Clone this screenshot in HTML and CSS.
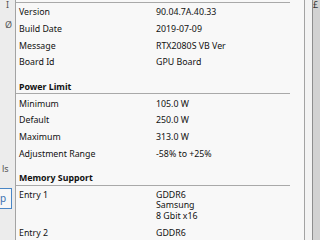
FILE: index.html
```html
<!DOCTYPE HTML>
<html>
<head>
	<title>BIOS Info</title>
	<meta name="viewport" content="width=device-width">
	<link rel="stylesheet" href="styles.css">
</head>
<body>
	<div class="window">
		<div class="sidestrip">
			<div class="frag fone">I</div>
			<div class="frag ftwo">Ø</div>
			<div class="frag fthree">ls</div>
			<div class="fbox">p</div>
		</div>
		<div class="panel">
			<div class="section first">
				<div class="row"><span class="label">Version</span><span class="value">90.04.7A.40.33</span></div>
				<div class="row"><span class="label">Build Date</span><span class="value">2019-07-09</span></div>
				<div class="row"><span class="label">Message</span><span class="value">RTX2080S VB Ver</span></div>
				<div class="row"><span class="label">Board Id</span><span class="value">GPU Board</span></div>
			</div>
			<div class="section">
				<div class="shead">Power Limit</div>
				<div class="row"><span class="label">Minimum</span><span class="value">105.0 W</span></div>
				<div class="row"><span class="label">Default</span><span class="value">250.0 W</span></div>
				<div class="row"><span class="label">Maximum</span><span class="value">313.0 W</span></div>
				<div class="row"><span class="label">Adjustment Range</span><span class="value">-58% to +25%</span></div>
			</div>
			<div class="section">
				<div class="shead">Memory Support</div>
				<div class="row multi"><span class="label">Entry 1</span><span class="value">GDDR6<br>Samsung<br>8 Gbit x16</span></div>
				<div class="row"><span class="label">Entry 2</span><span class="value">GDDR6</span></div>
			</div>
		</div>
		<div class="rightstrip">
			<div class="gap"></div>
			<div class="scroll"><div class="frag fright">£</div></div>
		</div>
	</div>
</body>
</html>
```

FILE: styles.css
```css
/* base */
* {
	font-family: "Noto Sans", "Open Sans", sans-serif;
	box-sizing: border-box;
}
body {
	margin: 0;
	background-color: #f0f0f0;
	color: #111111;
	font-size: 8.8px;
}
.window {
	display: flex;
	width: 320px;
	height: 240px;
	overflow: hidden;
}

/* neighbour pane, clipped on the left */
.sidestrip {
	width: 16px;
	flex: none;
	background-color: #ececec;
	border-right: 1px solid #a3a3a3;
	overflow: hidden;
	display: flex;
	flex-direction: column;
}
.frag {
	color: #555555;
	font-size: 9px;
	line-height: 10px;
	white-space: nowrap;
}
.fone {
	margin: 0 0 0 6px;
}
.ftwo {
	margin: 10px 0 0 5px;
}
.fthree {
	margin: 134px 0 0 2px;
}
.fbox {
	margin-top: 14px;
	margin-left: -6px;
	width: 18px;
	height: 21px;
	border: 1px solid #4a86c5;
	background-color: #f7f7f7;
	color: #3a6fb0;
	font-size: 10px;
	line-height: 18px;
	padding-left: 5px;
}

/* main info panel */
.panel {
	width: 289px;
	flex: none;
	background-color: #f8f8f8;
	border-right: 1px solid #a3a3a3;
	padding-right: 14px;
}
.section {
	margin-bottom: 8px;
}
.shead {
	font-weight: bold;
	height: 16.67px;
	line-height: 16px;
	padding: 1px 0 0 3px;
	border-bottom: 1px solid #a9a9a9;
}
.first {
	border-top: 1px solid #a9a9a9;
	margin-top: 2px;
}
.row {
	display: flex;
	padding: 4.33px 0 2.33px 0;
	line-height: 10px;
}
.multi {
	line-height: 10.5px;
}
.label {
	width: 140px;
	padding-left: 3px;
	flex: none;
}
.value {
	flex: 1;
}

/* right edge */
.rightstrip {
	flex: 1;
	display: flex;
}
.gap {
	width: 8px;
	background-color: #f3f3f3;
	border-right: 1px solid #8e8e8e;
}
.scroll {
	flex: 1;
	background-color: #d2d2d2;
	overflow: hidden;
}
.fright {
	color: #333333;
	margin-top: 0;
	margin-left: 0;
}
```
